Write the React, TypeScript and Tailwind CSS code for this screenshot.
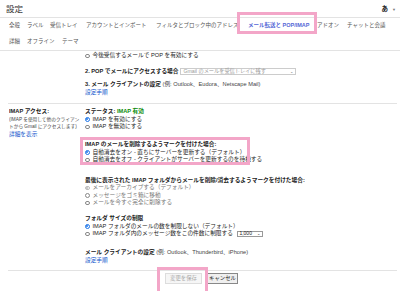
import clsx from "clsx";

const tabsTop = [
  { t: "全般", w: "w-[18px]" },
  { t: "ラベル", w: "w-[23px]" },
  { t: "受信トレイ", w: "w-[36px]" },
  { t: "アカウントとインポート", w: "w-[70px]" },
  { t: "フィルタとブロック中のアドレス", w: "w-[92px]" },
  { t: "メール転送と POP/IMAP", w: "w-[69px]", active: true },
  { t: "アドオン", w: "w-[30px]" },
  { t: "チャットと会議", w: "w-[45px]" },
];

const tabsBottom = [
  { t: "詳細", w: "w-[18px]" },
  { t: "オフライン", w: "w-[35px]" },
  { t: "テーマ", w: "w-[30px]" },
];

function Radio({ on, dim }: { on?: boolean; dim?: boolean }) {
  return (
    <span
      className={clsx(
        "flex h-[4.5px] w-[4.5px] shrink-0 items-center justify-center rounded-full border-[0.8px]",
        on && !dim && "border-[#1a73e8] bg-white",
        on && dim && "border-[#bbb] bg-white",
        !on && "border-[#888] bg-white",
      )}
    >
      {on && (
        <span
          className={clsx(
            "h-[2.2px] w-[2.2px] rounded-full",
            dim ? "bg-[#bbb]" : "bg-[#1a73e8]",
          )}
        />
      )}
    </span>
  );
}

function Opt({
  on,
  dim,
  children,
}: {
  on?: boolean;
  dim?: boolean;
  children: React.ReactNode;
}) {
  return (
    <div className="flex h-[7.5px] items-center gap-[3px] whitespace-nowrap">
      <Radio on={on} dim={dim} />
      <span>{children}</span>
    </div>
  );
}

function Rule() {
  return <div className="ml-[8px] mr-[3px] h-px bg-[#e3e3e3]" />;
}

function Pink({ className }: { className: string }) {
  return (
    <div
      className={clsx(
        "pointer-events-none absolute border-[3px] border-[#f3a6c8]",
        className,
      )}
    />
  );
}

export default function App() {
  return (
    <div className="relative h-[291px] w-[400px] overflow-hidden bg-white font-['Liberation_Sans','Noto_Sans_CJK_JP',sans-serif] text-[5.7px] leading-[7.5px] text-[#222]">
      {/* header */}
      <div className="flex h-[18px] items-center justify-between border-b border-[#e3e3e3] pl-[6px] pr-[4px] pt-[2px]">
        <h1 className="text-[8.5px] leading-none text-[#333]">設定</h1>
        <div className="flex items-center gap-[4px]">
          <span className="text-[6.5px] font-bold leading-none">あ</span>
          <span className="text-[4px] leading-none text-[#777]">▼</span>
        </div>
      </div>

      {/* tabs */}
      <div className="h-[33px] border-b border-[#e3e3e3] pl-[9px] text-[5.5px] text-[#555]">
        <div className="flex h-[15px] items-center whitespace-nowrap">
          {tabsTop.map((x) => (
            <span
              key={x.t}
              className={clsx(x.w, "shrink-0", x.active && "font-bold text-[#5566d6]")}
            >
              {x.t}
            </span>
          ))}
        </div>
        <div className="flex h-[17px] items-center whitespace-nowrap">
          {tabsBottom.map((x) => (
            <span key={x.t} className={clsx(x.w, "shrink-0")}>
              {x.t}
            </span>
          ))}
        </div>
      </div>

      {/* POP */}
      <div className="pl-[85px] pt-px pb-[7px]">
        <Opt>今後受信するメールで POP を有効にする</Opt>
        <div className="mt-[8px] flex h-[7.5px] items-center whitespace-nowrap">
          <span className="font-bold">2. POP でメールにアクセスする場合</span>
          <div className="ml-[2px] flex h-[7px] w-[116px] items-center justify-between border border-[#ccc] px-[2px] text-[5.2px] text-[#999]">
            <span>Gmail のメールを受信トレイに残す</span>
            <span className="text-[4px] text-[#666]">⌄</span>
          </div>
        </div>
        <div className="mt-[6px] whitespace-nowrap">
          <span className="font-bold">3. メール クライアントの設定</span>
          <span className="text-[#444]"> (例: Outlook、Eudora、Netscape Mail)</span>
        </div>
        <div className="text-[#15c]">設定手順</div>
      </div>
      <Rule />

      {/* IMAP */}
      <div className="flex pl-[9px] pt-[4px] pb-[6px]">
        <div className="w-[76px] shrink-0 overflow-hidden whitespace-nowrap">
          <div className="font-bold">IMAP アクセス:</div>
          <div className="text-[4.7px] text-[#444]">(IMAP を使用して他のクライアン</div>
          <div className="text-[4.7px] text-[#444]">トから Gmail にアクセスします)</div>
          <div className="text-[#15c]">詳細を表示</div>
        </div>
        <div className="flex-1">
          <div className="font-bold">
            ステータス: <span className="text-[#0a8a0a]">IMAP 有効</span>
          </div>
          <Opt on>IMAP を有効にする</Opt>
          <Opt>IMAP を無効にする</Opt>

          <div className="mt-[10.5px]">
            <div className="font-bold">IMAP のメールを削除するようマークを付けた場合:</div>
            <Opt on>自動消去をオン - 直ちにサーバーを更新する（デフォルト）</Opt>
            <Opt>自動消去をオフ - クライアントがサーバーを更新するのを待機する</Opt>
          </div>

          <div className="mt-[13px]">
            <div className="font-bold">
              最後に表示された IMAP フォルダからメールを削除/消去するようマークを付けた場合:
            </div>
            <div className="text-[#777]">
              <Opt on dim>メールをアーカイブする（デフォルト）</Opt>
              <Opt>メッセージをゴミ箱に移動</Opt>
              <Opt>メールを今すぐ完全に削除する</Opt>
            </div>
          </div>

          <div className="mt-[8.5px]">
            <div className="font-bold">フォルダ サイズの制限</div>
            <Opt on>IMAP フォルダのメールの数を制限しない（デフォルト）</Opt>
            <div className="flex h-[7.5px] items-center gap-[3px] whitespace-nowrap">
              <Radio />
              <span>IMAP フォルダ内のメッセージ数をこの件数に制限する</span>
              <div className="ml-px flex h-[6.5px] w-[26px] items-center justify-between border border-[#999] px-[1.5px] text-[5px]">
                <span>1,000</span>
                <span className="text-[4px]">⌄</span>
              </div>
            </div>
          </div>

          <div className="mt-[11.5px] whitespace-nowrap">
            <span className="font-bold">メール クライアントの設定</span>
            <span className="text-[#444]"> (例: Outlook、Thunderbird、iPhone)</span>
          </div>
          <div className="text-[#15c]">設定手順</div>
        </div>
      </div>
      <Rule />

      <div className="flex gap-[5px] pl-[165px] pt-[2px]">
        <button className="h-[11px] w-[37px] border border-[#ddd] bg-[#f6f6f6] text-[5.4px] text-[#aaa]">
          変更を保存
        </button>
        <button className="h-[11px] w-[31px] border border-[#888] bg-[#efefef] text-[5.4px] text-[#222]">
          キャンセル
        </button>
      </div>

      <Pink className="left-[237px] top-[12px] h-[22px] w-[80px]" />
      <Pink className="left-[80px] top-[137px] h-[28px] w-[170px]" />
      <Pink className="left-[157px] top-[267px] h-[30px] w-[51px]" />
    </div>
  );
}
